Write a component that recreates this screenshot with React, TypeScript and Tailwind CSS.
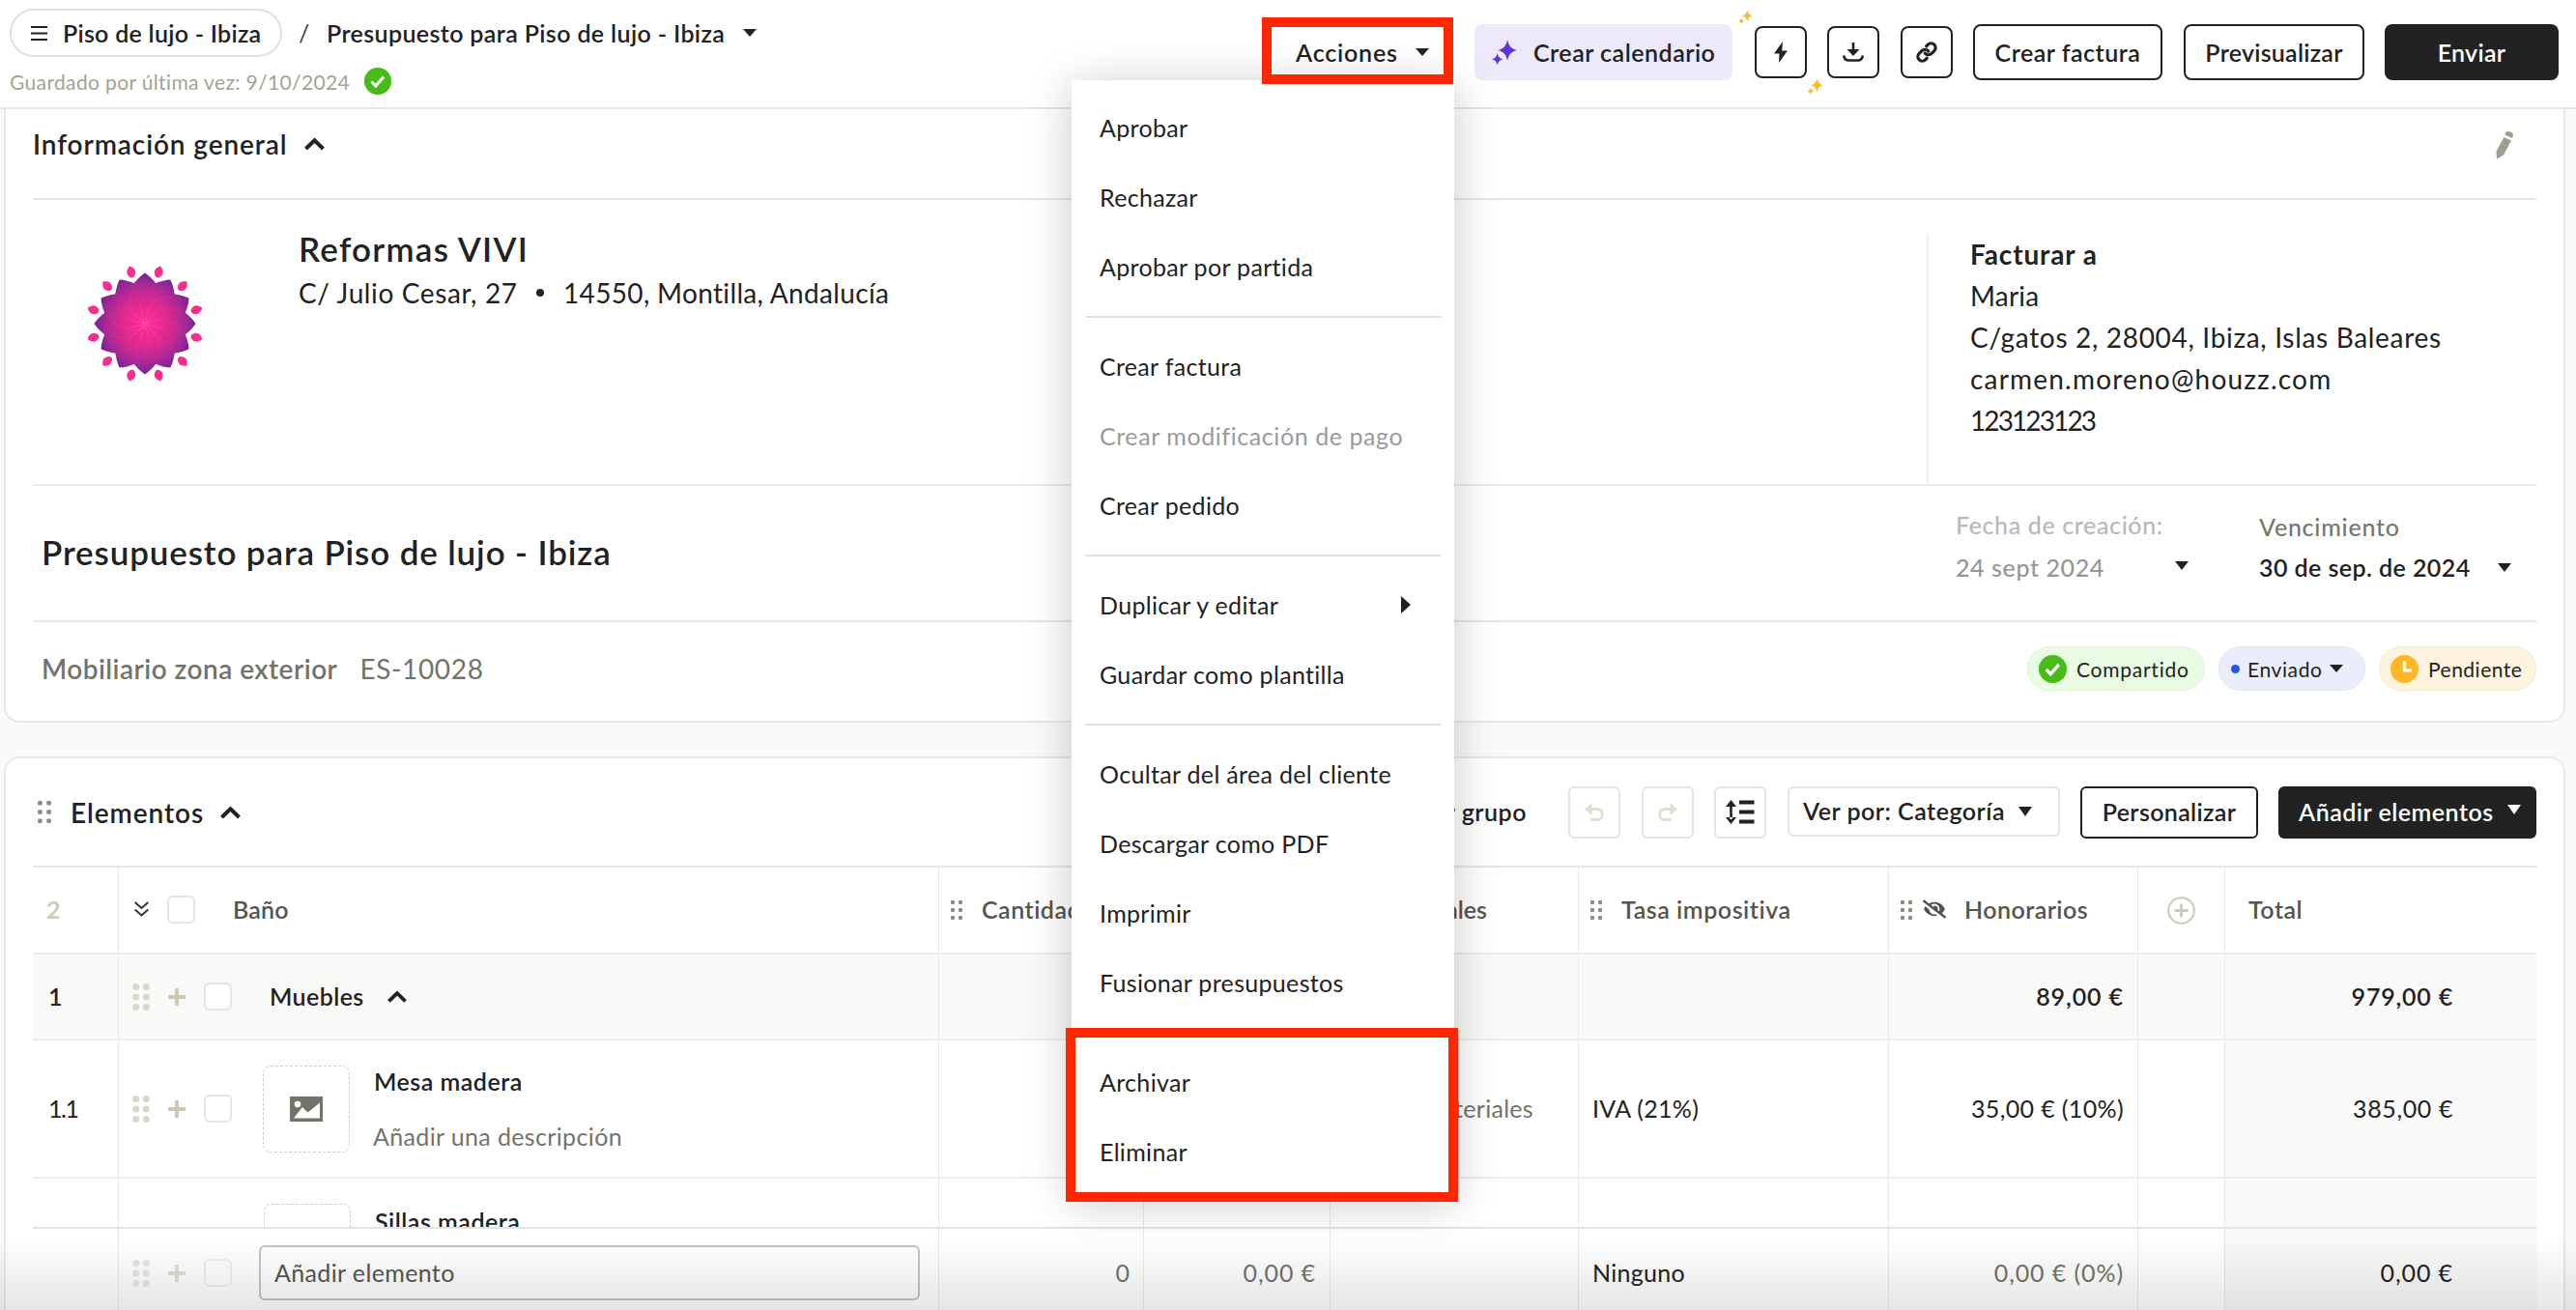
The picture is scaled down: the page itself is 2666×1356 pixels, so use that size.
import React from 'react';
import clsx from 'clsx';
import { FaEyeSlash } from 'react-icons/fa';
import { Link } from 'lucide-react';

const PETALS = [0, 30, 60, 90, 120, 150, 180, 210, 240, 270, 300, 330];

function Caret({ className, w = 14, h = 8 }: { className?: string; w?: number; h?: number }) {
  return (
    <svg width={w} height={h} viewBox="0 0 14 8" preserveAspectRatio="none" className={clsx('shrink-0', className)} fill="currentColor">
      <path d="M0 0h14L7 8z" />
    </svg>
  );
}

function ChevronUp({ className, w = 21 }: { className?: string; w?: number }) {
  return (
    <svg width={w} height={(w * 14) / 21} viewBox="0 0 21 14" className={clsx('shrink-0', className)} fill="none" stroke="currentColor" strokeWidth="4">
      <path d="M1.500 12 10.500 3.200l9 8.800" />
    </svg>
  );
}

function Sparkle({ className, size }: { className?: string; size: number }) {
  return (
    <svg width={size} height={size} viewBox="0 0 25 25" className={clsx('shrink-0', className)} fill="currentColor">
      <path d="M15.500 0C16.700 6 19 9.200 25 10.500C19 11.800 16.700 15 15.500 21C14.300 15 12 11.800 6 10.500C12 9.200 14.300 6 15.500 0Z" />
      <path d="M5.500 13.500C6.200 17 7.800 18.800 11 19.500C7.800 20.200 6.200 22 5.500 25.500C4.800 22 3.200 20.200 0 19.500C3.200 18.800 4.800 17 5.500 13.500Z" />
    </svg>
  );
}

function SmallDots({ className, w = 12, h = 20 }: { className?: string; w?: number; h?: number }) {
  return (
    <svg width={w} height={h} viewBox="0 0 12 20" className={clsx('shrink-0 text-[#8c8c80]', className)} fill="currentColor">
      {[0, 8, 16].map((y) => (
        <g key={y}>
          <rect x="0" y={y} width="4" height="4" rx="1" />
          <rect x="8" y={y} width="4" height="4" rx="1" />
        </g>
      ))}
    </svg>
  );
}

function Check({ size, className }: { size: number; className?: string }) {
  return (
    <svg width={size} height={size} viewBox="0 0 28 28" className={clsx('shrink-0', className)}>
      <circle cx="14" cy="14" r="14" fill="#47bb16" />
      <path d="m7.500 14.500 4.300 4.500 8.300-9.500" fill="none" stroke="#fff" strokeWidth="3.200" />
    </svg>
  );
}

function Flower() {
  return (
    <svg width="122" height="122" viewBox="-61 -61 122 122" className="shrink-0">
      <defs>
        <radialGradient id="petal" gradientUnits="userSpaceOnUse" cx="0" cy="0" r="54">
          <stop offset="0.120" stopColor="#fa2a92" />
          <stop offset="0.500" stopColor="#d5298f" />
          <stop offset="0.780" stopColor="#a42896" />
          <stop offset="1" stopColor="#6a229a" />
        </radialGradient>
      </defs>
      {PETALS.map((a) => (
        <path key={a} transform={`rotate(${a})`} fill="url(#petal)" d="M0 0L-11.500 -41.500C-8 -46 -4 -50 0 -52.500C4 -50 8 -46 11.500 -41.500Z" />
      ))}
      {PETALS.map((a) => (
        <path key={a} transform={`rotate(${a + 15})`} fill="none" stroke="#ff3d9d" strokeOpacity="0.280" strokeWidth="1.200" d="M0 0C-10 -12 -14 -26 -1 -39" />
      ))}
      {PETALS.map((a) => (
        <path key={a} transform={`rotate(${a + 15})`} fill="#f92e93" d="M0 -61.500C5 -58 6.200 -54 1.500 -49.500L-1.500 -49.500C-6.200 -54 -5 -58 0 -61.500Z" />
      ))}
    </svg>
  );
}

function IconButton({ children }: { children: React.ReactNode }) {
  return <div className="flex h-[54px] w-[54px] shrink-0 items-center justify-center rounded-[8px] border-2 border-[#222]">{children}</div>;
}

function Header() {
  return (
    <header className="flex h-[113px] shrink-0 border-b-2 border-[#e6e6e6] bg-white pl-[10px]">
      <div className="flex w-[1296px] flex-col">
        <div className="mt-[9px] flex h-[50px] items-center text-[25px] font-semibold">
          <div className="flex h-[50px] w-[282px] items-center rounded-full border-2 border-[#e1e1d7] pl-[20px]">
            <svg width="17" height="15" viewBox="0 0 17 15" className="mr-[16px] shrink-0" stroke="#222" strokeWidth="2">
              <path d="M0 1h17M0 7.500h17M0 14h17" />
            </svg>
            <span className="tracking-[0.27px]">Piso de lujo - Ibiza</span>
          </div>
          <span className="ml-[17px] w-[29px] font-normal text-[#444]">/</span>
          <span className="tracking-[0.37px]">Presupuesto para Piso de lujo - Ibiza</span>
          <Caret className="ml-[19px]" />
        </div>
        <div className="mt-[11px] flex h-[28px] items-center text-[21px] text-[#a3a393]">
          <span className="tracking-[0.36px]">Guardado por última vez: 9/10/2024</span>
          <Check size={28} className="ml-[15px]" />
        </div>
      </div>
      <div className="flex h-[108px] items-center text-[25px] font-semibold">
        <div className="flex h-[58px] w-[220px] items-center pl-[35px]">
          <span className="tracking-[0.8px]">Acciones</span>
          <Caret className="ml-[18px]" />
        </div>
        <div className="flex h-[58px] w-[267px] items-center rounded-[8px] bg-[#eee9f8] pl-[18px]">
          <Sparkle size={26} className="text-[#5f35d5]" />
          <span className="ml-[17px] tracking-[0.5px]">Crear calendario</span>
        </div>
        <div className="relative ml-[23px]">
          <IconButton>
            <svg width="14" height="22" viewBox="0 0 14 22" fill="#222">
              <path d="M9 0 0 12.500h5.500L5 22l9-12.500H8.200z" />
            </svg>
          </IconButton>
          <Sparkle size={15} className="absolute -top-[17px] -left-[17px] text-[#f2bd3a]" />
          <Sparkle size={17} className="absolute top-[54px] left-[54px] text-[#fbb829]" />
        </div>
        <div className="ml-[21px]">
          <IconButton>
            <svg width="22" height="20" viewBox="0 0 22 20" fill="none" stroke="#222" strokeWidth="2.600">
              <path d="M11 0v8" />
              <path d="M4.500 7h13L11 14z" fill="#222" stroke="none" />
              <path d="M1.200 13.500c.6 3.500 2.200 5 5 5h9.600c2.800 0 4.400-1.500 5-5" />
            </svg>
          </IconButton>
        </div>
        <div className="ml-[22px]">
          <IconButton>
            <Link size={22} strokeWidth={3.500} color="#222" />
          </IconButton>
        </div>
        <div className="ml-[21px] flex h-[58px] w-[196px] items-center justify-center rounded-[8px] border-2 border-[#222] tracking-[0.5px]">Crear factura</div>
        <div className="ml-[22px] flex h-[58px] w-[187px] items-center justify-center rounded-[8px] border-2 border-[#222] tracking-[0.25px]">Previsualizar</div>
        <div className="ml-[21px] flex h-[58px] w-[180px] items-center justify-center rounded-[8px] bg-[#222] tracking-[0.3px] text-white">Enviar</div>
      </div>
    </header>
  );
}

function GeneralInfo() {
  return (
    <section className="ml-[4px] flex h-[635px] w-[2651px] shrink-0 flex-col rounded-b-[16px] border-x-2 border-b-2 border-[#e8e8e4] bg-white pr-[28px] pl-[28px]">
      <div className="flex h-[94px] shrink-0 items-start border-b-2 border-[#e6e6e6]">
        <div className="flex h-[72px] grow items-center">
          <h2 className="text-[28px] font-semibold tracking-[0.9px]">Información general</h2>
          <ChevronUp className="ml-[17px]" />
        </div>
        <svg width="20" height="30" viewBox="0 0 20 30" className="mt-[22px] mr-[23px]" fill="#a09f8f">
          <path d="M11.500 1.600C13 0 19 1.800 19 4.500L18 8l-7.600-3.500z" />
          <path d="m9.400 7 7.600 3.500L9 25.500 2 29.500 1.500 21.500z" />
        </svg>
      </div>
      <div className="flex h-[296px] shrink-0 border-b-2 border-[#ececec]">
        <div className="flex grow">
          <div className="mt-[67px] ml-[55px]">
            <Flower />
          </div>
          <div className="ml-[98px] flex flex-col">
            <h3 className="mt-[29px] flex h-[42px] items-center text-[35px] font-semibold tracking-[1.25px]">Reformas VIVI</h3>
            <div className="mt-[8px] flex h-[34px] items-center text-[28px] tracking-[0.62px]">
              <span className="w-[246px]">C/ Julio Cesar, 27</span>
              <span className="h-[8px] w-[8px] rounded-full bg-[#222]" />
              <span className="ml-[20px] tracking-[0.34px]">14550, Montilla, Andalucía</span>
            </div>
          </div>
        </div>
        <div className="mt-[35px] w-[631px] border-l-2 border-[#efefec] pl-[43px] text-[28px] leading-[43px]">
          <p className="font-bold tracking-[0.85px]">Facturar a</p>
          <p className="tracking-[0.2px]">Maria</p>
          <p className="tracking-[0.68px]">C/gatos 2, 28004, Ibiza, Islas Baleares</p>
          <p className="tracking-[1.2px]">carmen.moreno@houzz.com</p>
          <p className="tracking-[-1.9px]">123123123</p>
        </div>
      </div>
      <div className="flex h-[141px] shrink-0 items-center border-b-2 border-[#e6e6e6] pl-[9px]">
        <h1 className="mb-[2px] grow text-[35px] font-semibold tracking-[0.86px]">Presupuesto para Piso de lujo - Ibiza</h1>
        <div className="mb-[15px] w-[314px] text-[25px] font-medium">
          <div className="flex h-[44px] items-center tracking-[0.62px] text-[#b8b8b8]">Fecha de creación:</div>
          <div className="flex h-[44px] items-center text-[#969696]">
            <span className="w-[227px] tracking-[0.6px]">24 sept 2024</span>
            <Caret h={9} className="mb-[4px] text-[#222]" />
          </div>
        </div>
        <div className="mb-[13px] w-[287px] text-[25px]">
          <div className="flex h-[43px] items-center font-medium tracking-[0.75px] text-[#77776c]">Vencimiento</div>
          <div className="flex h-[42px] items-center">
            <span className="w-[247px] font-semibold tracking-[0.43px]">30 de sep. de 2024</span>
            <Caret h={9} />
          </div>
        </div>
      </div>
      <div className="flex h-[96px] shrink-0 items-center pl-[9px] text-[28px] text-[#73736a]">
        <span className="font-semibold tracking-[0.46px]">Mobiliario zona exterior</span>
        <span className="ml-[23px] grow tracking-[0.65px]">ES-10028</span>
        <div className="flex items-center gap-[14px] text-[21px] text-[#222]">
          <div className="flex h-[46px] w-[184px] items-center rounded-full border border-[#dff2d6] bg-[#e9fbe2] pl-[11px] tracking-[0.75px]">
            <Check size={29} className="mr-[10px]" />
            Compartido
          </div>
          <div className="flex h-[46px] w-[152px] items-center rounded-full border border-[#e0e6f2] bg-[#e9eefa] pl-[12px]">
            <span className="mr-[8px] h-[9px] w-[9px] rounded-full bg-[#2456e0]" />
            <span className="tracking-[0.6px]">Enviado</span>
            <Caret className="ml-[7px]" />
          </div>
          <div className="flex h-[46px] w-[163px] items-center rounded-full border border-[#f5ead0] bg-[#fdf3de] pl-[11px] tracking-[0.5px]">
            <svg width="29" height="29" viewBox="0 0 29 29" className="mr-[10px] shrink-0">
              <circle cx="14.500" cy="14.500" r="14.500" fill="#fdb827" />
              <path d="M14.500 6.500v9.500h7.500" fill="none" stroke="#fff" strokeWidth="3.200" />
            </svg>
            Pendiente
          </div>
        </div>
      </div>
    </section>
  );
}

function ToolButton({ children }: { children: React.ReactNode }) {
  return <div className="flex h-[54px] w-[54px] shrink-0 items-center justify-center rounded-[6px] border-2 border-[#e4e4df]">{children}</div>;
}

function Undo({ flip }: { flip?: boolean }) {
  return (
    <svg width="20" height="20" viewBox="0 0 20 20" className={clsx(flip && '-scale-x-100')} fill="none" stroke="#e0ded2" strokeWidth="2.800">
      <path d="M5 6.500h8c7 0 7 11 0 11H6.500" />
      <path d="M7.500 0v13L0 6.500z" fill="#e0ded2" stroke="none" />
    </svg>
  );
}

const COLS = 'grid grid-cols-[88px_849px_212px_193px_257px_321px_258px_90px_323px]';

function Cell({ className, children }: { className?: string; children?: React.ReactNode }) {
  return <div className={clsx('flex min-w-0 items-center border-l border-[#e9e9e6]', className)}>{children}</div>;
}

function RowControls({ faded }: { faded?: boolean }) {
  return (
    <div className={clsx('flex items-center', faded && 'opacity-60')}>
      <svg width="18" height="28" viewBox="0 0 18 28" className="ml-[14px] shrink-0" fill="#d9d7c8">
        {[3.500, 14, 24.500].map((y) => (
          <g key={y}>
            <circle cx="3.700" cy={y} r="3.500" />
            <circle cx="14.300" cy={y} r="3.500" />
          </g>
        ))}
      </svg>
      <svg width="18" height="18" viewBox="0 0 18 18" className="ml-[19px] shrink-0" stroke="#ccc8b4" strokeWidth="3.800">
        <path d="M9 0v18M0 9h18" />
      </svg>
      <Checkbox className="ml-[19px]" />
    </div>
  );
}

function Checkbox({ className }: { className?: string }) {
  return <div className={clsx('h-[29px] w-[29px] shrink-0 rounded-[6px] border-2 border-[#e5e4de] bg-white', className)} />;
}

function Thumb({ children }: { children?: React.ReactNode }) {
  return <div className="flex h-[90px] w-[90px] shrink-0 items-center justify-center rounded-[8px] border border-dashed border-[#cfcfca]">{children}</div>;
}

function ElementsTable() {
  return (
    <section className="mt-[35px] ml-[4px] w-[2651px] grow rounded-t-[16px] border-x-2 border-t-2 border-[#e8e8e4] bg-white pr-[28px] pl-[28px]">
      <div className="flex h-[113px] items-center border-b-2 border-[#e6e6e6] text-[25px] font-semibold">
        <SmallDots w={14} h={23} className="ml-[5px]" />
        <h2 className="ml-[20px] text-[28px] tracking-[0.95px]">Elementos</h2>
        <ChevronUp className="ml-[17px]" />
        <div className="ml-auto flex items-center">
          <span className="mr-[43px] tracking-[0.5px]">Añadir grupo</span>
          <ToolButton><Undo /></ToolButton>
          <div className="ml-[22px]"><ToolButton><Undo flip /></ToolButton></div>
          <div className="ml-[21px]">
            <ToolButton>
              <svg width="30" height="25" viewBox="0 0 30 25" fill="#222">
                <path d="M5.500 0 11 7H0zM5.500 25 11 18H0zM4.200 5h2.600v15H4.200zM14 0.500h15.500v4H14zM14 10.500h15.500v4H14zM14 20.500h15.500v4H14z" />
              </svg>
            </ToolButton>
          </div>
          <div className="mb-[2px] ml-[22px] flex h-[52px] w-[282px] items-center rounded-[6px] border-2 border-[#e4e4df] pl-[14px]">
            <span className="w-[223px] tracking-[0.5px]">Ver por: Categoría</span>
            <Caret w={14} h={10} />
          </div>
          <div className="ml-[21px] flex h-[54px] w-[184px] items-center justify-center rounded-[6px] border-2 border-[#222] tracking-[0.35px]">Personalizar</div>
          <div className="ml-[21px] flex h-[54px] w-[267px] items-center rounded-[6px] bg-[#222] pl-[21px] text-white">
            <span className="w-[216px] tracking-[0.5px]">Añadir elementos</span>
            <Caret h={10} className="mb-[5px]" />
          </div>
        </div>
      </div>

      <div className={clsx(COLS, 'h-[90px] border-b-2 border-[#ececea] text-[25px] font-semibold text-[#55554e]')}>
        <div className="flex items-center pb-[2px] pl-[14px] font-bold text-[#cfccba]">2</div>
        <Cell className="pb-[2px]">
          <svg width="15" height="16" viewBox="0 0 15 16" className="ml-[16px] shrink-0" fill="none" stroke="#333" strokeWidth="2">
            <path d="m.7 1 6.800 6 6.800-6M.7 8.500l6.800 6 6.800-6" />
          </svg>
          <Checkbox className="ml-[19px]" />
          <span className="ml-[39px] tracking-[0.2px]">Baño</span>
        </Cell>
        <Cell><SmallDots className="ml-[12px]" /><span className="mb-[2px] ml-[20px] tracking-[0.5px]">Cantidad</span></Cell>
        <Cell />
        <Cell className="justify-end pr-[94px] pb-[2px]">Materiales</Cell>
        <Cell><SmallDots className="ml-[12px]" /><span className="mb-[2px] ml-[20px] tracking-[0.55px]">Tasa impositiva</span></Cell>
        <Cell>
          <SmallDots className="ml-[12px]" />
          <FaEyeSlash size={24} className="mb-[3px] ml-[11px]" />
          <span className="mb-[2px] ml-[19px] tracking-[0.45px]">Honorarios</span>
        </Cell>
        <Cell className="justify-center">
          <svg width="29" height="29" viewBox="0 0 29 29" fill="none" stroke="#ccc9b6" strokeWidth="2">
            <circle cx="14.500" cy="14.500" r="13.300" />
            <path d="M14.500 7.500v14M7.500 14.500h14" strokeWidth="2.800" />
          </svg>
        </Cell>
        <Cell className="pb-[2px] pl-[24px] tracking-[0.5px]">Total</Cell>
      </div>

      <div className={clsx(COLS, 'h-[89px] border-b-2 border-[#ececea] bg-[#f9f9f8] text-[25px] font-semibold')}>
        <div className="flex items-center pl-[16px]">1</div>
        <Cell>
          <RowControls />
          <span className="ml-[39px] tracking-[0.4px]">Muebles</span>
          <ChevronUp w={20} className="ml-[24px]" />
        </Cell>
        <Cell /><Cell /><Cell /><Cell />
        <Cell className="justify-end pr-[14px] tracking-[0.9px]">89,00 €</Cell>
        <Cell />
        <Cell className="justify-end pr-[86px] tracking-[0.8px]">979,00 €</Cell>
      </div>

      <div className={clsx(COLS, 'h-[143px] border-b-2 border-[#ececea] text-[25px]')}>
        <div className="flex items-center pl-[16px] tracking-[-1.5px]">1.1</div>
        <Cell>
          <RowControls />
          <div className="ml-[32px]">
            <Thumb>
              <svg width="34" height="26" viewBox="0 0 34 26">
                <rect width="34" height="26" fill="#73736a" />
                <circle cx="8" cy="8" r="3.300" fill="#fff" />
                <path d="M4 22.500 13 11l5.500 5.500L31 6.500v16z" fill="#fff" />
              </svg>
            </Thumb>
          </div>
          <div className="ml-[25px] flex flex-col justify-center">
            <span className="flex h-[57px] items-center font-semibold tracking-[0.5px]">Mesa madera</span>
            <span className="-ml-[1px] flex h-[57px] items-center tracking-[0.36px] text-[#73736a]">Añadir una descripción</span>
          </div>
        </Cell>
        <Cell /><Cell />
        <Cell className="justify-end pr-[46px] tracking-[0.3px] text-[#73736a]">Materiales</Cell>
        <Cell className="pl-[14px] tracking-[0.3px]">IVA (21%)</Cell>
        <Cell className="justify-end pr-[14px] tracking-[0.36px]">35,00 € (10%)</Cell>
        <Cell />
        <Cell className="justify-end bg-[#f9f9f8] pr-[86px] tracking-[0.6px]">385,00 €</Cell>
      </div>

      <div className={clsx(COLS, 'h-[52px] overflow-hidden border-b-2 border-[#e3e3df] text-[25px]')}>
        <div />
        <Cell className="h-[50px] items-start">
          <div className="mt-[26px] ml-[150px]"><Thumb /></div>
          <span className="mt-[16px] ml-[25px] flex h-[57px] items-center font-semibold tracking-[0.5px]">Sillas madera</span>
        </Cell>
        <Cell /><Cell /><Cell /><Cell /><Cell /><Cell />
        <Cell className="bg-[#f9f9f8]" />
      </div>

      <div className={clsx(COLS, 'h-[91px] text-[25px]')}>
        <div />
        <Cell>
          <RowControls faded />
          <div className="ml-[28px] flex h-[57px] w-[684px] items-center rounded-[6px] border-2 border-[#c4c4c4] pl-[14px] tracking-[0.37px] text-[#55554e]">Añadir elemento</div>
        </Cell>
        <Cell className="justify-end pr-[14px] text-[#73736a]">0</Cell>
        <Cell className="justify-end pr-[14px] tracking-[0.9px] text-[#73736a]">0,00 €</Cell>
        <Cell />
        <Cell className="pl-[14px] tracking-[0.3px]">Ninguno</Cell>
        <Cell className="justify-end pr-[14px] tracking-[0.9px] text-[#73736a]">0,00 € (0%)</Cell>
        <Cell />
        <Cell className="justify-end bg-[#f9f9f8] pr-[86px] tracking-[0.9px]">0,00 €</Cell>
      </div>
    </section>
  );
}

const MENU: { label: string; disabled?: boolean; submenu?: boolean }[][] = [
  [{ label: 'Aprobar' }, { label: 'Rechazar' }, { label: 'Aprobar por partida' }],
  [{ label: 'Crear factura' }, { label: 'Crear modificación de pago', disabled: true }, { label: 'Crear pedido' }],
  [{ label: 'Duplicar y editar', submenu: true }, { label: 'Guardar como plantilla' }],
  [{ label: 'Ocultar del área del cliente' }, { label: 'Descargar como PDF' }, { label: 'Imprimir' }, { label: 'Fusionar presupuestos' }],
  [{ label: 'Archivar' }, { label: 'Eliminar' }],
];

function ActionsMenu() {
  return (
    <div className="absolute top-[83px] left-[1109px] w-[396px] bg-white pt-[13px] pb-[11px] text-[25px] tracking-[0.32px] shadow-[0_6px_44px_rgba(0,0,0,0.22)]">
      {MENU.map((group, i) => (
        <div key={i}>
          {i > 0 && <div className="mx-[14px] mt-[15px] mb-[14px] h-[2px] bg-[#e3e1d5]" />}
          {group.map((item) => (
            <div key={item.label} className={clsx('flex h-[72px] items-center justify-between pr-[45px] pl-[29px]', item.disabled && 'tracking-[0.58px] text-[#9a9a9a]')}>
              {item.label}
              {item.submenu && (
                <svg width="10" height="18" viewBox="0 0 10 18" fill="#222">
                  <path d="M0 0v18l10-9z" />
                </svg>
              )}
            </div>
          ))}
        </div>
      ))}
    </div>
  );
}

export default function App() {
  return (
    <div className="relative flex h-[1356px] w-[2666px] flex-col overflow-hidden bg-[#fafaf8] font-['Lato',sans-serif] leading-none text-[#222]">
      <Header />
      <GeneralInfo />
      <ElementsTable />
      <div className="absolute inset-x-0 bottom-0 h-[76px] bg-linear-to-b from-transparent to-black/10" />
      <ActionsMenu />
      <div className="absolute top-[18px] left-[1306px] h-[69px] w-[198px] border-[10px] border-[#ff2600]" />
      <div className="absolute top-[1064px] left-[1103px] h-[180px] w-[406px] border-[10px] border-[#ff2600]" />
    </div>
  );
}
